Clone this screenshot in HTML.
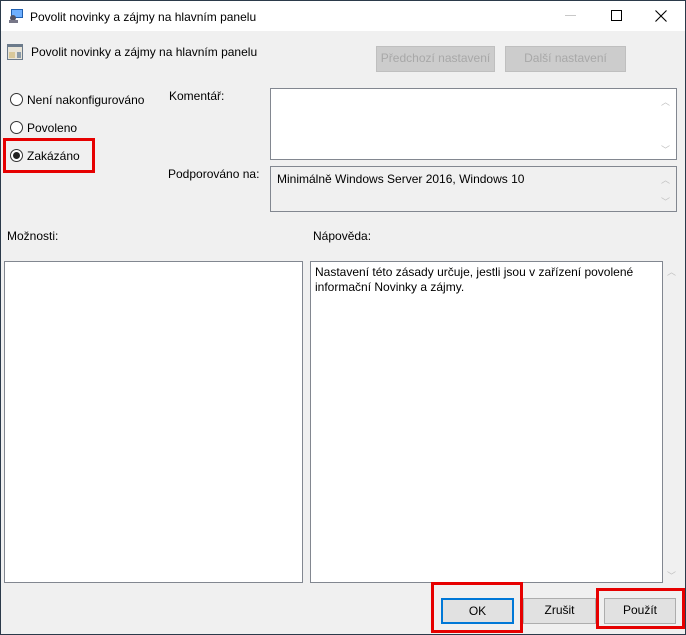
<!DOCTYPE html>
<html><head><meta charset="utf-8"><style>
*{margin:0;padding:0;box-sizing:border-box}
body{width:686px;height:635px;overflow:hidden;background:#2b3a4a;font-family:"Liberation Sans",sans-serif;font-size:12px;color:#000;position:relative}
.win{position:absolute;left:1px;top:1px;width:684px;height:633px;background:#f0f0f0}
.title{position:absolute;left:0;top:0;width:684px;height:30px;background:#fff}
.a{position:absolute;white-space:nowrap}
.box{position:absolute;background:#fff;border:1px solid #828790}
.btn{position:absolute;border:1px solid #adadad;background:#e1e1e1;text-align:center;line-height:23px}
.dis{background:#cccccc;border-color:#bfbfbf;color:#a8a8a8}
.radio{position:absolute;width:13px;height:13px;border:1px solid #333;border-radius:50%;background:#fff}
.red{position:absolute;border:3px solid #e60000}
.arr{position:absolute;color:#c0c0c0;font-size:9px}
</style></head><body>
<div class="win">
<div class="title">
<svg class="a" style="left:7px;top:7px" width="16" height="16"><rect x="3" y="1" width="12" height="9" fill="#1f5fb0"/><rect x="4" y="2" width="10" height="7" fill="#6fb0ff"/><circle cx="5" cy="10" r="3" fill="#556"/><rect x="1" y="12" width="9" height="3" fill="#778"/></svg>
<div class="a" style="left:29px;top:9px">Povolit novinky a zájmy na hlavním panelu</div>
<div class="a" style="left:564px;top:14px;width:11px;height:1px;background:#c8c8c8"></div>
<div class="a" style="left:610px;top:9px;width:11px;height:11px;border:1px solid #000"></div>
<svg class="a" style="left:654px;top:9px" width="12" height="12"><path d="M0.5 0.5L11.5 11.5M11.5 0.5L0.5 11.5" stroke="#000" stroke-width="1.1"/></svg>
</div>
<svg class="a" style="left:6px;top:43px" width="17" height="17"><rect x="0" y="0" width="16" height="16" fill="#6b7a8a"/><rect x="1" y="3" width="14" height="12" fill="#e8e4d8"/><rect x="2" y="8" width="6" height="6" fill="#d8c89a"/><rect x="10" y="8" width="4" height="6" fill="#8a9aa8"/></svg>
<div class="a" style="left:30px;top:44px">Povolit novinky a zájmy na hlavním panelu</div>
<div class="btn dis" style="left:375px;top:45px;width:119px;height:26px">Předchozí nastavení</div>
<div class="btn dis" style="left:504px;top:45px;width:121px;height:26px">Další nastavení</div>
<div class="radio" style="left:9px;top:92px"></div><div class="a" style="left:26px;top:92px">Není nakonfigurováno</div>
<div class="radio" style="left:9px;top:120px"></div><div class="a" style="left:26px;top:120px">Povoleno</div>
<div class="radio" style="left:9px;top:148px"><div style="position:absolute;left:2px;top:2px;width:7px;height:7px;border-radius:50%;background:#222"></div></div><div class="a" style="left:26px;top:148px">Zakázáno</div>
<div class="red" style="left:2px;top:137px;width:92px;height:35px"></div>
<div class="a" style="left:168px;top:88px">Komentář:</div>
<div class="box" style="left:269px;top:87px;width:407px;height:72px"></div>
<div class="arr" style="left:660px;top:94px">︿</div><div class="arr" style="left:660px;top:142px">﹀</div>
<div class="a" style="left:167px;top:166px">Podporováno na:</div>
<div class="box" style="left:269px;top:165px;width:407px;height:46px;background:#f0f0f0"></div>
<div class="a" style="left:276px;top:171px">Minimálně Windows Server 2016, Windows 10</div>
<div class="arr" style="left:660px;top:172px">︿</div><div class="arr" style="left:660px;top:194px">﹀</div>
<div class="a" style="left:6px;top:228px">Možnosti:</div>
<div class="a" style="left:312px;top:228px">Nápověda:</div>
<div class="box" style="left:3px;top:260px;width:299px;height:322px"></div>
<div class="box" style="left:309px;top:260px;width:353px;height:322px"></div>
<div class="a" style="left:314px;top:264px;line-height:15px">Nastavení této zásady určuje, jestli jsou v zařízení povolené<br>informační Novinky a zájmy.</div>
<div class="arr" style="left:666px;top:264px">︿</div><div class="arr" style="left:666px;top:568px">﹀</div>
<div class="btn" style="left:440px;top:597px;width:73px;height:26px;border:2px solid #0078d7;line-height:22px">OK</div>
<div class="btn" style="left:522px;top:597px;width:73px;height:26px">Zrušit</div>
<div class="btn" style="left:603px;top:597px;width:72px;height:26px">Použít</div>
<div class="red" style="left:430px;top:581px;width:92px;height:51px"></div>
<div class="red" style="left:595px;top:587px;width:89px;height:41px"></div>
</div>
</body></html>
